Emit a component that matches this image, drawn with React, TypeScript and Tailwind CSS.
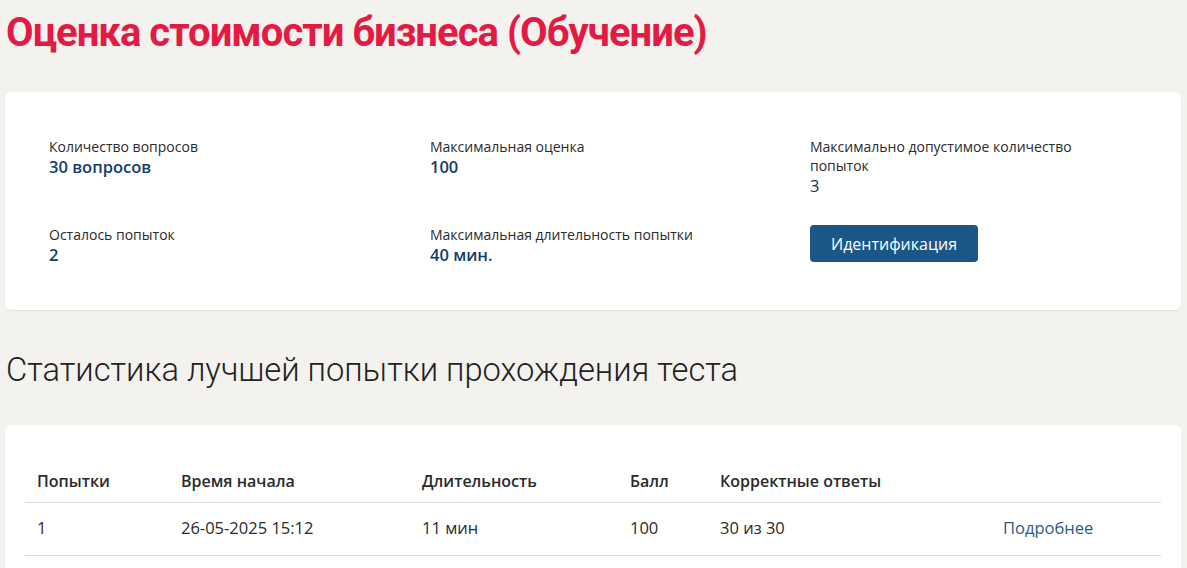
const stats = [
  { label: 'Количество вопросов', value: '30 вопросов', bold: true },
  { label: 'Максимальная оценка', value: '100', bold: true },
  { label: 'Максимально допустимое количество попыток', value: '3', bold: false },
  { label: 'Осталось попыток', value: '2', bold: true },
  { label: 'Максимальная длительность попытки', value: '40 мин.', bold: true },
]

const columns = ['Попытки', 'Время начала', 'Длительность', 'Балл', 'Корректные ответы', '']

const attempts = [
  { n: '1', start: '26-05-2025 15:12', duration: '11 мин', score: '100', correct: '30 из 30' },
]

export default function App() {
  return (
    <div className="min-h-[568px] bg-[#f3f2ef] px-[5px] pt-[10px] font-['Open_Sans',sans-serif] text-[#222]">
      <h1 className="pl-px font-['Roboto',sans-serif] text-[40px] font-bold leading-[46px] tracking-[-0.95px] text-[#e31b43]">
        Оценка стоимости бизнеса (Обучение)
      </h1>

      <section className="mt-[36px] w-[1176px] rounded-md bg-white pb-[44px] pl-[44px] pt-[45px] shadow-[0_1px_1px_rgba(0,0,0,0.08)]">
        <div className="grid grid-cols-[381px_380px_290px] gap-y-[28px]">
          {stats.map((s) => (
            <Stat key={s.label} {...s} />
          ))}
          <div>
            <button className="h-[37px] rounded-[4px] bg-[#1b5689] px-[21px] text-[16px] text-white">
              Идентификация
            </button>
          </div>
        </div>
      </section>

      <h2 className="mt-[40px] pl-px font-['Roboto',sans-serif] text-[32.7px] font-light leading-[40px] text-[#222]">
        Статистика лучшей попытки прохождения теста
      </h2>

      <section className="mt-[35px] w-[1176px] rounded-md bg-white px-[20px] pb-[20px] pt-[24px]">
        <table className="w-[1136px] border-collapse text-left text-[16px]">
          <thead>
            <tr className="h-[53px] border-b border-[#dcdcdc]">
              {columns.map((c, i) => (
                <th
                  key={i}
                  className={
                    'px-[12px] pt-[11px] align-middle font-semibold text-[#2b2b2b] ' +
                    ['w-[144px]', 'w-[241px]', 'w-[208px]', 'w-[90px]', 'w-[283px]', ''][i]
                  }
                >
                  {c}
                </th>
              ))}
            </tr>
          </thead>
          <tbody>
            {attempts.map((a) => (
              <tr key={a.n} className="h-[53px] border-b border-[#dcdcdc] text-[16.5px] text-[#2b2b2b]">
                <td className="px-[12px]">{a.n}</td>
                <td className="px-[12px]">{a.start}</td>
                <td className="px-[12px]">{a.duration}</td>
                <td className="px-[12px]">{a.score}</td>
                <td className="px-[12px]">{a.correct}</td>
                <td className="px-[12px]">
                  <a href="#" className="text-[#2c5a86]">
                    Подробнее
                  </a>
                </td>
              </tr>
            ))}
          </tbody>
        </table>
      </section>
    </div>
  )
}

function Stat({ label, value, bold }: { label: string; value: string; bold: boolean }) {
  return (
    <div className="pr-[10px]">
      <div className="text-[14px] leading-[19px] text-[#2b2b2b]">{label}</div>
      <div
        className={
          'text-[16.5px] leading-[22px] ' + (bold ? 'font-semibold text-[#143c6a]' : 'text-[#17304f]')
        }
      >
        {value}
      </div>
    </div>
  )
}
